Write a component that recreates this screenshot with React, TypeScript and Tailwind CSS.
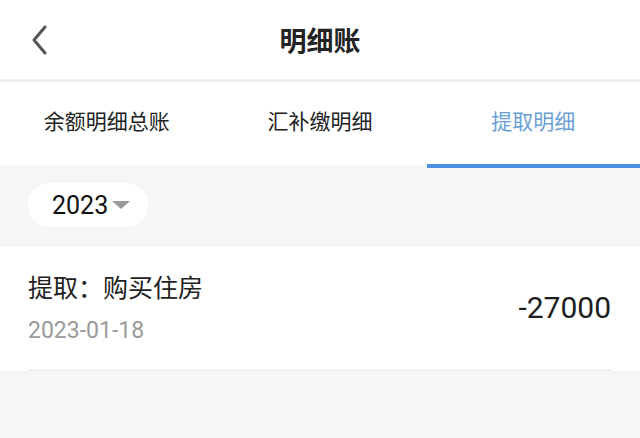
import React from "react";

const tabs = ["余额明细总账", "汇补缴明细", "提取明细"];

export default function App() {
  const active = 2;
  return (
    <div
      className="w-[640px] h-[438px] bg-[#f6f6f6] overflow-hidden"
      style={{ fontFamily: '"Noto Sans CJK SC", Roboto, sans-serif' }}
    >
      {/* Header */}
      <header className="h-[79px] bg-white grid grid-cols-[80px_1fr_80px] items-center">
        <button className="h-full flex items-center pl-[30px]">
          <svg width="18" height="30" viewBox="0 0 18 30" fill="none">
            <path d="M15 2 L4 15 L15 28" stroke="#555" strokeWidth="3" strokeLinecap="round" strokeLinejoin="round" />
          </svg>
        </button>
        <h1 className="text-center text-[27px] font-bold text-[#222] leading-none">明细账</h1>
        <div />
      </header>
      <div className="h-[3px] bg-[#efefef]" />

      {/* Tabs */}
      <nav className="h-[83px] bg-white flex">
        {tabs.map((t, i) => (
          <div key={t} className="flex-1 relative flex items-center justify-center pb-[6px]">
            <span className={`text-[21px] leading-none ${i === active ? "text-[#6a9fd6]" : "text-[#222]"}`}>{t}</span>
            {i === active && <div className="absolute left-0 right-0 bottom-[-3px] h-[4px] bg-[#4a8fe0]" />}
          </div>
        ))}
      </nav>

      {/* Year picker */}
      <div className="h-[82px] pt-[18px] pl-[28px]">
        <button className="w-[120px] h-[44px] rounded-full bg-white flex items-center pl-[24px] gap-[4px]">
          <span className="text-[25px] text-[#111] leading-none" style={{ fontFamily: 'Roboto, "Noto Sans CJK SC", sans-serif' }}>
            2023
          </span>
          <svg width="18" height="9" viewBox="0 0 18 9">
            <path d="M0 0 H18 L9 8 Z" fill="#9a9a9a" />
          </svg>
        </button>
      </div>

      {/* List */}
      <div className="bg-white px-[28px]">
        <div className="h-[124px] flex items-center justify-between border-b-2 border-[#f0f0f0]">
          <div className="flex flex-col">
            <span className="text-[25px] text-[#222] leading-none">提取：购买住房</span>
            <span
              className="text-[23px] text-[#9a9a9a] leading-none mt-[20px]"
              style={{ fontFamily: 'Roboto, "Noto Sans CJK SC", sans-serif' }}
            >
              2023-01-18
            </span>
          </div>
          <span
            className="text-[30px] text-[#1e1e1e] leading-none mr-[1px]"
            style={{ fontFamily: 'Roboto, "Noto Sans CJK SC", sans-serif' }}
          >
            -27000
          </span>
        </div>
      </div>
    </div>
  );
}
